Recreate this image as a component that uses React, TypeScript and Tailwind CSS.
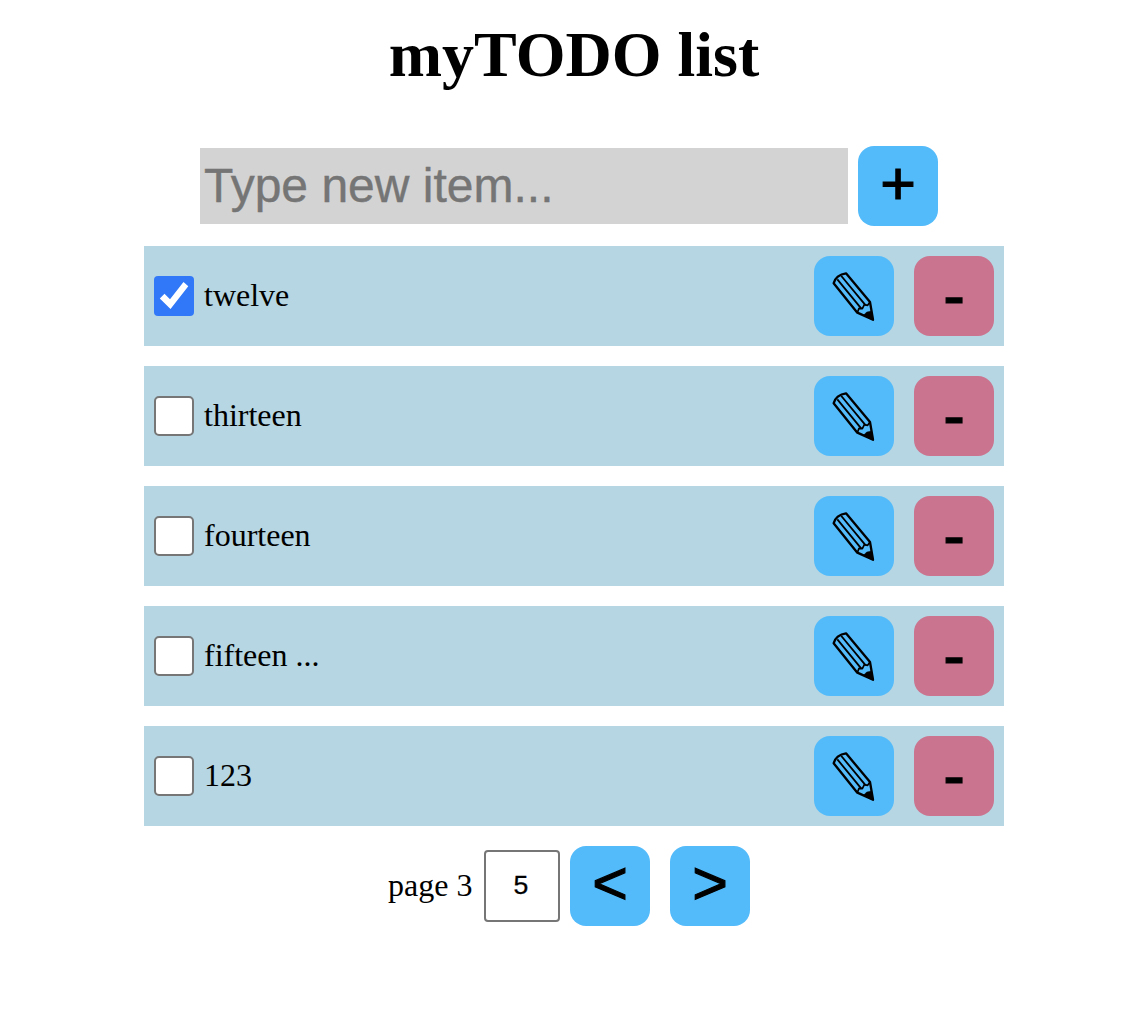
import { useState } from "react";
import type { ReactNode } from "react";

type Item = { text: string; done: boolean };

const initialItems: Item[] = [
  { text: "twelve", done: true },
  { text: "thirteen", done: false },
  { text: "fourteen", done: false },
  { text: "fifteen ...", done: false },
  { text: "123", done: false },
];

function BlueButton({ label, children }: { label: string; children: ReactNode }) {
  return (
    <button
      aria-label={label}
      className="flex size-20 shrink-0 items-center justify-center rounded-[16px] bg-[#54bbfa] font-['Liberation_Sans',Arial,sans-serif] text-[61px] leading-none text-black [-webkit-text-stroke:1.2px_black]"
    >
      {children}
    </button>
  );
}

function Pencil() {
  return (
    <svg viewBox="0 0 240 240" className="size-20" fill="none" stroke="#000" strokeWidth="7" strokeLinejoin="round">
      <path d="M59 82C62 66 77 54 96 52L168 138L177 191L130 170Z" />
      <path d="M70 70L142 158M82 60L155 148" strokeWidth="5.5" />
      <path d="M130 170L135 157L145 158L151 146L161 148L168 138" strokeWidth="5" />
      <path d="M149 177L158 168L172 165L179 194Z" fill="#000" strokeWidth="1" />
    </svg>
  );
}

function Check({ done, text, onToggle }: { done: boolean; text: string; onToggle: () => void }) {
  return (
    <button
      role="checkbox"
      aria-checked={done}
      aria-label={text}
      onClick={onToggle}
      className={
        done
          ? "size-10 shrink-0 rounded-[4px] bg-[#3078f7]"
          : "size-10 shrink-0 rounded-[5px] border-2 border-[#767676] bg-white"
      }
    >
      {done && (
        <svg viewBox="0 0 40 40" className="size-10" fill="#fff">
          <path d="M5.8 22.5L10.5 17.8L16 23.3L29.5 6L34.3 10.2L16.5 33Z" />
        </svg>
      )}
    </button>
  );
}

export default function App() {
  const [items, setItems] = useState(initialItems);
  const toggle = (index: number) =>
    setItems(items.map((item, i) => (i === index ? { ...item, done: !item.done } : item)));

  return (
    <main className="flex h-[1028px] flex-col items-center bg-white pl-1 font-['Liberation_Serif','Times_New_Roman',serif] text-[32px] text-black">
      <h1 className="mt-[18px] h-[74px] text-[64px] leading-[74px] font-bold">myTODO list</h1>
      <div className="mt-[54px] flex w-[860px] items-center gap-[10px] pl-14">
        <input
          placeholder="Type new item..."
          className="h-[76px] w-[648px] bg-[#d3d3d3] px-1 pb-px font-['Liberation_Sans',Arial,sans-serif] text-[48px] text-black [-webkit-text-stroke:0.4px_#757575] placeholder:text-[#757575] focus:outline-none"
        />
        <BlueButton label="Add item">
          <span className="relative -top-[3px]">+</span>
        </BlueButton>
      </div>
      <ul className="mt-5 flex w-[860px] flex-col gap-5">
        {items.map((item, i) => (
          <li key={item.text} className="flex h-[100px] items-center bg-[#b5d6e2] px-[10px]">
            <Check done={item.done} text={item.text} onToggle={() => toggle(i)} />
            <span className="ml-[10px] grow pb-[2px] leading-9">{item.text}</span>
            <div className="flex gap-5">
              <BlueButton label="Edit item">
                <Pencil />
              </BlueButton>
              <button
                aria-label="Remove item"
                className="flex size-20 items-center justify-center rounded-[16px] bg-[#cb748f] font-['Liberation_Sans',Arial,sans-serif] text-[65px] leading-none [-webkit-text-stroke:1.2px_black]"
              >
                <span className="relative -top-px">-</span>
              </button>
            </div>
          </li>
        ))}
      </ul>
      <div className="mt-5 flex w-[860px] items-center pl-[244px]">
        <span className="w-24 pb-[2px] leading-9">page 3</span>
        <input
          defaultValue="5"
          aria-label="Items per page"
          className="h-[72px] w-[76px] rounded-[4px] border-2 border-[#767676] bg-white pr-[2px] pb-[2px] text-center font-['Liberation_Sans',Arial,sans-serif] text-[26.67px] [-webkit-text-stroke:0.3px_black]"
        />
        <div className="ml-[10px] flex gap-5">
          <BlueButton label="Previous page">
            <span className="relative -top-[3px]">&lt;</span>
          </BlueButton>
          <BlueButton label="Next page">
            <span className="relative -top-[3px]">&gt;</span>
          </BlueButton>
        </div>
      </div>
    </main>
  );
}
